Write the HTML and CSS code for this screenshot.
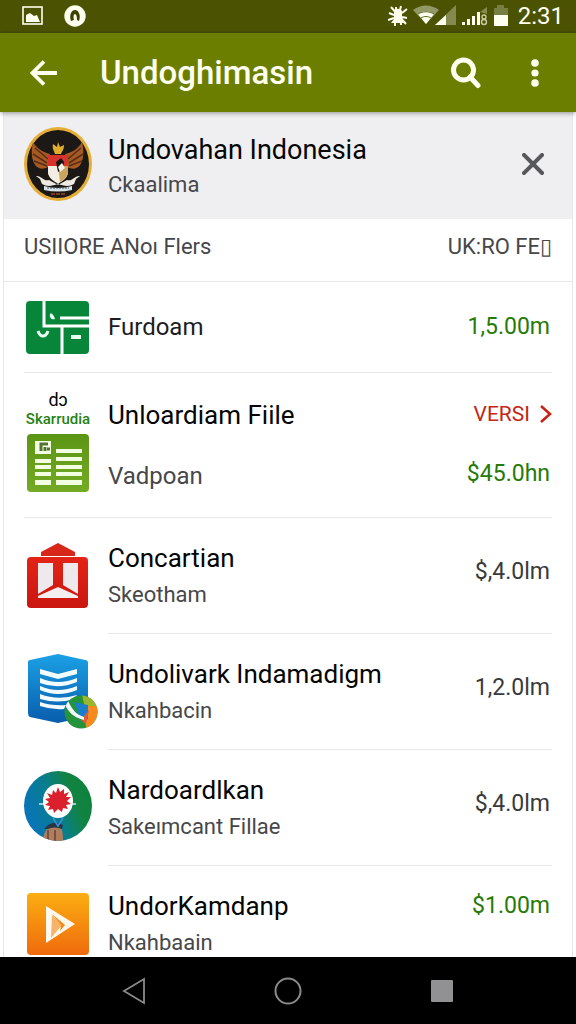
FILE: index.html
```html
<!DOCTYPE html>
<html lang="id">
<head>
  <meta charset="UTF-8">
  <title>Undoghimasin</title>
  <meta name="viewport" content="width=device-width, initial-scale=1.0">
  <link rel="stylesheet" href="styles.css">
</head>
<body>
  <div class="status-bar">
    <div class="status-left">
      <svg width="22" height="20" viewBox="0 0 22 20"><rect x="1" y="1" width="19" height="17" fill="none" stroke="#fffff0" stroke-width="1.6"/><path d="M4 16V9l4-2 4 3 3-1 3 7z" fill="#fffff0"/></svg>
      <svg width="22" height="22" viewBox="0 0 22 22"><circle cx="11" cy="11" r="10.7" fill="#fffff0"/><path d="M7 16c-2-5 0-11 4-11s6 6 4 11l-2-1c0-4-1-6-2-6s-2 2-1 6z" fill="#3d4204"/></svg>
    </div>
    <div class="status-right">
      <svg width="20" height="22" viewBox="0 0 20 22"><path d="M6 6c2-3 6-3 8 0v8l3 4H3l3-4z" fill="#fffff0"/><path d="M3 2l15 17M1 8l5 2M0 15l6-2M14 8l5-4M14 12l5 1M8 2v4M13 1l-1 4M7 17v4M13 17v3" stroke="#fffff0" stroke-width="2"/></svg>
      <svg class="wifi" width="44" height="21" viewBox="0 0 44 21"><path d="M0 5C8-1 18-1 26 5L13 19z" fill="#929865"/><path d="M5 9c5-4 11-4 16 0l-8 10z" fill="#fffff0"/><path d="M5 9c5-3 11-3 16 0M8 13c3-2 7-2 10 0" stroke="#5d641b" fill="none"/><path d="M43 0v20H22z" fill="#858b4e"/><path d="M33 10v10H22z" fill="#fffff0"/></svg>
      <svg width="26" height="20" viewBox="0 0 26 20"><path d="M0 16h3v3H0zM5 13h3v6H5zM10 10h3v9h-3zM15 6h3v13h-3z" fill="#fffff0"/><path d="M18 6l7-5v7" fill="#858b4e"/><circle cx="22" cy="11" r="2" fill="none" stroke="#c9cca8" stroke-width="1.3"/><circle cx="22" cy="16" r="2.5" fill="none" stroke="#c9cca8" stroke-width="1.4"/></svg>
      <svg width="16" height="22" viewBox="0 0 16 22"><path d="M4 0h7v3h4v7H1V3h3z" fill="#777d43"/><path d="M1 10h14v11H1z" fill="#fffff0"/></svg>
      <span class="clock">2:31</span>
    </div>
  </div>

  <header class="app-bar">
    <button class="icon-btn" aria-label="Kembali">
      <svg width="28" height="28" viewBox="0 0 28 28"><path d="M27 14H3M14 2.500L2.500 14 14 25.500" fill="none" stroke="#fffff0" stroke-width="3.800"/></svg>
    </button>
    <h1>Undoghimasin</h1>
    <button class="icon-btn" aria-label="Cari">
      <svg width="32" height="32" viewBox="0 0 32 32"><circle cx="13.500" cy="13" r="10" fill="none" stroke="#fffff0" stroke-width="5"/><path d="M20 20l8 8.500" stroke="#fffff0" stroke-width="5" stroke-linecap="round"/></svg>
    </button>
    <button class="icon-btn more" aria-label="Menu">
      <svg width="10" height="28" viewBox="0 0 10 28"><circle cx="5" cy="4" r="3.800" fill="#fffff0"/><circle cx="5" cy="14" r="3.600" fill="#fffff0"/><circle cx="5" cy="24" r="3.800" fill="#fffff0"/></svg>
    </button>
  </header>

  <main class="page">
    <section class="account">
      <svg class="icon" width="68" height="76" viewBox="0 0 68 76">
        <ellipse cx="34" cy="38" rx="34" ry="37" fill="#e4ae38"/>
        <ellipse cx="34" cy="38" rx="31" ry="34" fill="#1c1815"/>
        <path d="M24 41C11 48 5 32 9 16c4 7 10 10 17 12zM43 41c14 7 19-9 15-25-4 7-9 10-17 12z" fill="#a45a25"/>
        <path d="M11 22l13 11M9 28l14 9M10 35l13 5M57 22L44 33M59 28l-14 9M58 35l-13 5" stroke="#5b2c12" stroke-width="1.500"/>
        <path d="M31 28c-1-4-3-5-2-10l4 3 1-5 2 5 4-2c0 5-2 6-3 9z" fill="#e0ac2c"/>
        <path d="M24 29h20v17c0 6-6 9-10 12-4-3-10-6-10-12z" fill="#f2eee4"/>
        <path d="M24 29h20v11H24z" fill="#d8332a"/><path d="M34 40h10v6c0 4-3 7-8 10z" fill="#c9a560"/>
        <path d="M24 40h9v13c-5-2-9-3-9-7z" fill="#f2eee4"/>
        <path d="M32 36l5-4 3 4-1 7-5 3z" fill="#171412"/><path d="M34 41l4-4 3 5-5 4z" fill="#f4f0e8"/>
        <path d="M12 50c5-1 8 6 13 4l9 5 9-5c5 2 8-5 13-4l-4 3-2 5c-5 3-10 2-16 0-6 2-11 3-16 0l-2-5z" fill="#eeeae1"/>
        <path d="M20 60q14 4 28 0v4q-14 3-28 0z" fill="#d8e3e8"/><path d="M23 62h22" stroke="#38556a" stroke-dasharray="2 1"/><path d="M27 68h14" stroke="#9d4521" stroke-width="1.500" stroke-dasharray="4 1"/>
      </svg>
      <div class="text">
        <h2>Undovahan Indonesia</h2>
        <p>Ckaalima</p>
      </div>
      <button class="icon-btn close" aria-label="Tutup">
        <svg width="22" height="22" viewBox="0 0 22 22"><path d="M2 2l18 18M20 2L2 20" stroke="#57585b" stroke-width="4" stroke-linecap="square"/></svg>
      </button>
    </section>

    <div class="list-head">
      <span>USIIORE ANoı Flers</span>
      <span>UK:RO FE▯</span>
    </div>

    <ul class="list">
      <li class="row full short">
        <svg class="icon" width="68" height="54" viewBox="0 0 68 54">
          <rect x="2" y="1" width="63" height="53" rx="4" fill="#07863a"/>
          <path d="M20 0v26h45M38 27v27M36 18h29" stroke="#fff" stroke-width="3" fill="none"/>
          <path d="M14 31c1 3 2 5 5 5s4-2 5-5" stroke="#e7fff0" stroke-width="3" fill="none"/>
          <path d="M26 14c1-2 4 1 5 5-3 1-6-1-5-5zM47 35h10v4H47z" fill="#e7fff0"/>
        </svg>
        <div class="row-body">
          <div class="text"><p class="name">Furdoam</p></div>
          <span class="price green">1,5.00m</span>
        </div>
      </li>

      <li class="row full tall">
        <div class="icon stack">
          <span class="mini">dɔ</span>
          <span class="brand">Skarrudia</span>
          <svg width="62" height="58" viewBox="0 0 62 58">
            <defs><linearGradient id="leaf" x2="0" y2="1"><stop stop-color="#5c9515"/><stop offset="1" stop-color="#74aa24"/></linearGradient></defs>
            <rect width="62" height="58" rx="4" fill="url(#leaf)"/>
            <path d="M8 7h16v13H8zM8 25h16v4H8zM8 31h16v4H8zM8 38h16v4H8zM8 46h16v5H8zM29 15h26v4H29zM29 23h26v4H29zM29 31h26v4H29zM29 38h26v4H29zM29 46h26v5H29z" fill="#f3ffe1"/>
            <path d="M14 17v-7h7M18 17v-4M20 15h3" stroke="#557236" stroke-width="3" fill="none"/>
          </svg>
        </div>
        <div class="row-body">
          <div class="text">
            <h3>Unloardiam Fiile</h3>
            <p>Vadpoan</p>
          </div>
          <div class="side">
            <a href="#versi" class="versi">VERSI
              <svg width="12" height="20" viewBox="0 0 12 20"><path d="M1 2l9 8-9 8" fill="none" stroke="#c32615" stroke-width="2.600"/></svg>
            </a>
            <span class="price green">$45.0hn</span>
          </div>
        </div>
      </li>

      <li class="row">
        <svg class="icon" width="68" height="66" viewBox="0 0 68 66">
          <defs><linearGradient id="brick" x2="0" y2="1"><stop stop-color="#e32417"/><stop offset="1" stop-color="#ca160f"/></linearGradient></defs>
          <path d="M17 13V9L34 0l17 9v4z" fill="#d7261a"/>
          <rect x="3" y="14" width="61" height="51" rx="4" fill="url(#brick)"/>
          <path d="M14 20h15v22l-15 9zM39 20h15v31l-15-9z" fill="#eee9ec"/>
          <path d="M14 55v-2l20-9 20 9v2z" fill="#f3eef0"/>
        </svg>
        <div class="row-body">
          <div class="text"><h3>Concartian</h3><p>Skeotham</p></div>
          <span class="price">$,4.0lm</span>
        </div>
      </li>

      <li class="row">
        <svg class="icon wide" width="74" height="76" viewBox="0 0 74 76">
          <defs>
            <linearGradient id="sky" x2="0" y2="1"><stop stop-color="#1ba0e5"/><stop offset="1" stop-color="#095dac"/></linearGradient>
            <clipPath id="disc"><circle cx="57" cy="58" r="16.500"/></clipPath>
          </defs>
          <path d="M4 8q0-2 2-2L34 0l27 6q3 0 3 3v50q0 3-3 4L34 69 6 63q-2-1-2-4z" fill="url(#sky)"/>
          <path d="M16 15l18 5 19-5v5l-19 5-18-5zM16 24q18 8 37 0v4q-19 8-37 1zM16 32q18 8 37 0v4q-19 8-37 0zM16 40q18 7 37 1l-3 4q-16 5-34 0zM16 48q12 4 26 3l-2 4q-12 1-24-3z" fill="#f2fbff"/>
          <g clip-path="url(#disc)">
            <path d="M38 40h40v36H38z" fill="#25933a"/>
            <path d="M58 40h20v20H62z" fill="#9cb52e"/><path d="M64 52l12 0v16l-13 8-3-12z" fill="#f58b1f"/>
            <path d="M50 48l14 3v14l-6 3z" fill="#1a7fca"/><path d="M57 66l8-10-3 14z" fill="#e05c3b"/>
            <path d="M44 47c5 9 7 13 16 16v3c-12-3-16-9-20-17z" fill="#f0faff"/>
          </g>
        </svg>
        <div class="row-body">
          <div class="text"><h3>Undolivark Indamadigm</h3><p>Nkahbacin</p></div>
          <span class="price">1,2.0lm</span>
        </div>
      </li>

      <li class="row">
        <svg class="icon" width="68" height="76" viewBox="0 0 68 76">
          <defs>
            <linearGradient id="globe" y1=".4" x2="1"><stop stop-color="#0875b4"/><stop offset=".35" stop-color="#087e8d"/><stop offset=".65" stop-color="#128341"/><stop offset="1" stop-color="#08823a"/></linearGradient>
            <clipPath id="ball"><ellipse cx="34" cy="36" rx="34" ry="35"/></clipPath>
          </defs>
          <ellipse cx="34" cy="36" rx="34" ry="35" fill="url(#globe)"/>
          <g clip-path="url(#ball)">
            <path d="M19 72c0-10 5-17 13-17 6 0 7 6 7 17z" fill="#b07d5d"/><path d="M24 60v12M31 60v12" stroke="#684332" stroke-width="1.500"/>
            <path d="M20 59q8-10 19-4l-1 4q-8-3-14 0z" fill="#273746"/>
          </g>
          <path d="M15 34h37" stroke="#cfeaf8" stroke-width="1.500"/>
          <path d="M29 48l5 8 5-8" stroke="#3d8fe0" stroke-width="1.500" fill="none"/>
          <ellipse cx="34" cy="31" rx="15" ry="17" fill="#fff"/>
          <path d="M34 17l2 5 4-3v5l5-2-3 5 5 0-4 4 4 3-5 1 2 4-5-1-1 4-4-3-4 4-1-4-5 1 2-4-5-1 4-3-4-3 5-1-3-5 5 2 1-5 3 3z" fill="#d9202c"/>
        </svg>
        <div class="row-body">
          <div class="text"><h3>Nardoardlkan</h3><p>Sakeımcant Fillae</p></div>
          <span class="price">$,4.0lm</span>
        </div>
      </li>

      <li class="row last">
        <svg class="icon" width="68" height="62" viewBox="0 0 68 62">
          <defs><linearGradient id="amber" x2="0" y2="1"><stop stop-color="#fbae12"/><stop offset="1" stop-color="#ef6a0c"/></linearGradient></defs>
          <rect x="3" width="62" height="62" rx="4" fill="url(#amber)"/>
          <path d="M22 13l29 18-29 19z" fill="#fff8ed"/><path d="M28 22l10 10-11 13z" fill="#f6b36b"/><path d="M28 21l13 11-5 6 1-6z" fill="#f38b16"/>
        </svg>
        <div class="row-body">
          <div class="text"><h3>UndorKamdanp</h3><p>Nkahbaain</p></div>
          <span class="price green">$1.00m</span>
        </div>
      </li>
    </ul>
  </main>

  <nav class="nav-bar">
    <button aria-label="Kembali"><svg width="24" height="28" viewBox="0 0 24 28"><path d="M22 2v24L2 14z" fill="none" stroke="#8a8a8a" stroke-width="1.800"/></svg></button>
    <button aria-label="Beranda"><svg width="28" height="28" viewBox="0 0 28 28"><circle cx="14" cy="14" r="12.500" fill="none" stroke="#8a8a8a" stroke-width="2"/></svg></button>
    <button aria-label="Terbaru"><svg width="24" height="24" viewBox="0 0 24 24"><rect x="1" y="1" width="22" height="22" rx="1" fill="#919193"/></svg></button>
  </nav>
</body>
</html>
```
FILE: styles.css
```css
* {
  box-sizing: border-box;
  margin: 0;
  padding: 0;
}

body {
  font-family: Roboto, "Liberation Sans", sans-serif;
  background: #fff;
  color: #050505;
  height: 100vh;
  display: flex;
  flex-direction: column;
  overflow: hidden;
}

svg {
  display: block;
  flex-shrink: 0;
}

button {
  background: none;
  border: none;
  cursor: pointer;
}

h1, h2, h3 {
  font-weight: 400;
}

/* status bar */
.status-bar {
  display: flex;
  justify-content: space-between;
  align-items: center;
  height: 33px;
  padding: 0 12px 2px 22px;
  background: #4b5303;
  color: #fffff0;
}

.status-left {
  display: flex;
  align-items: center;
  gap: 20px;
}

.status-right {
  display: flex;
  align-items: center;
  gap: 5px;
}

.clock {
  font-size: 24px;
  line-height: 30px;
  padding-left: 4px;
}

/* app bar */
.app-bar {
  position: relative;
  z-index: 1;
  display: flex;
  align-items: center;
  height: 79px;
  padding: 0 28px 0 30px;
  background: #6b7e00;
  color: #fffff0;
  box-shadow: 0 1px 5px rgba(0, 0, 0, 0.4);
}

.app-bar h1 {
  flex: 1;
  padding-left: 42px;
  font-size: 33px;
  line-height: 40px;
  font-weight: 500;
}

.app-bar .more {
  padding: 0 8px 0 48px;
}

/* account */
.page {
  flex: 1;
  min-height: 0;
  overflow: hidden;
  margin: 0 3px;
  border: solid #e3e5e8;
  border-width: 0 1px;
}

.account {
  display: flex;
  gap: 16px;
  align-items: center;
  padding: 14px 28px 17px 20px;
  background: #efeff1;
}

.text {
  flex: 1;
  min-width: 0;
}

.text h2,
.text h3 {
  font-size: 26px;
  line-height: 40px;
  white-space: nowrap;
}

.text p {
  font-size: 22px;
  line-height: 34px;
  color: #47474a;
  white-space: nowrap;
}

.account .text {
  padding-top: 6px;
}

.account h2 {
  font-size: 27px;
  line-height: 36px;
}

.list-head {
  display: flex;
  justify-content: space-between;
  padding: 11px 20px 17px;
  font-size: 22px;
  line-height: 34px;
  color: #47474a;
  border-bottom: 1px solid #e6e7e9;
}

/* list */
.list {
  list-style: none;
  padding: 0 20px;
}

.row {
  display: flex;
  gap: 16px;
  align-items: center;
}

.icon {
  width: 68px;
}

.icon.wide {
  width: 74px;
  margin-right: -6px;
}

.row-body {
  flex: 1;
  display: flex;
  align-items: center;
  justify-content: space-between;
  padding: 20px 0 21px;
  border-bottom: 1px solid #e6e7e9;
}

.row.full {
  border-bottom: 1px solid #e6e7e9;
}

.row.full .row-body {
  border-bottom: none;
}

.row.short .row-body {
  padding: 28px 0;
}

.row.full p {
  font-size: 24px;
}

.row .name {
  color: #1d1d1f;
}

.price {
  padding: 0 2px 6px 0;
  font-size: 23px;
  line-height: 34px;
  color: #39393c;
}

.price.green {
  color: #267a08;
}

.full .price {
  padding-bottom: 0;
}

.row.tall .row-body {
  padding: 22px 0 24px;
}

.tall h3 {
  margin-bottom: 24px;
}

.side {
  display: flex;
  flex-direction: column;
  align-items: flex-end;
  gap: 26px;
}

.versi {
  display: flex;
  align-items: center;
  gap: 10px;
  font-size: 21px;
  line-height: 34px;
  color: #c32615;
  text-decoration: none;
}

.stack {
  display: flex;
  flex-direction: column;
  align-items: center;
  padding-bottom: 8px;
}

.mini {
  font-size: 18px;
  line-height: 20px;
}

.brand {
  margin-bottom: 6px;
  font-size: 15px;
  line-height: 18px;
  font-weight: 500;
  color: #268217;
}

.last .row-body {
  align-items: flex-start;
  border-bottom: none;
}

.last .price {
  line-height: 40px;
}

/* navigation bar */
.nav-bar {
  display: flex;
  justify-content: center;
  align-items: center;
  gap: 128px;
  height: 67px;
  background: #000;
}
```
